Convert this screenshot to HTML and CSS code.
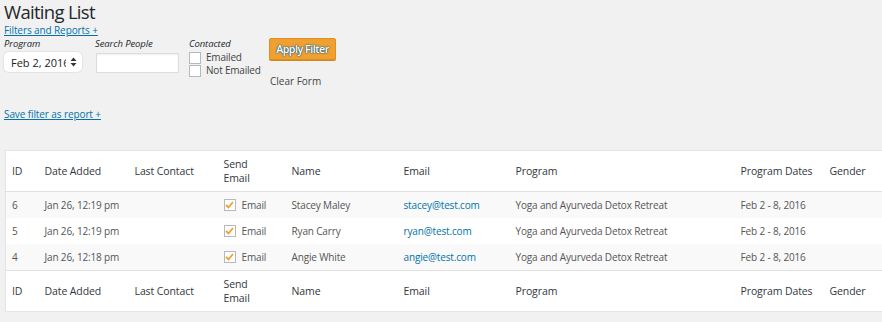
FILE: index.html
```html
<!DOCTYPE html>
<html lang="en">
<head>
    <meta charset="UTF-8">
    <title>Waiting List</title>
    <link rel="stylesheet" href="styles.css">
</head>
<body>
    <h1 class="page-title">Waiting List</h1>
    <a class="toggle-link" href="#">Filters and Reports +</a>
    <form class="filter-form">
        <div class="field field-program">
            <label class="field-label" for="program">Program</label>
            <div class="select-box" id="program">
                <span class="select-value">Feb 2, 2016</span>
                <svg class="select-arrows" width="7" height="10" viewBox="0 0 7 10"><path d="M3.5 0.5 L6.5 4 H0.5 Z M3.5 9.5 L0.5 6 H6.5 Z" fill="#333"/></svg>
            </div>
        </div>
        <div class="field field-search">
            <label class="field-label" for="search">Search People</label>
            <input class="text-input" type="text" id="search">
        </div>
        <div class="field field-contacted">
            <span class="field-label">Contacted</span>
            <label class="check-row"><span class="check-box"></span>Emailed</label>
            <label class="check-row"><span class="check-box"></span>Not Emailed</label>
        </div>
        <div class="field actions">
            <button type="button" class="apply-btn">Apply Filter</button>
            <span class="clear-link">Clear Form</span>
        </div>
    </form>
    <a class="toggle-link save-link" href="#">Save filter as report +</a>

    <div class="table-wrap">
        <table class="list-table">
            <colgroup>
                <col style="width:33px">
                <col style="width:90px">
                <col style="width:89px">
                <col style="width:68px">
                <col style="width:112px">
                <col style="width:112px">
                <col style="width:225px">
                <col style="width:89px">
                <col style="width:90px">
            </colgroup>
            <thead>
                <tr>
                    <th>ID</th><th>Date Added</th><th>Last Contact</th><th>Send<br>Email</th><th>Name</th><th>Email</th><th>Program</th><th>Program Dates</th><th>Gender</th>
                </tr>
            </thead>
            <tbody>
                <tr class="alt">
                    <td>6</td><td>Jan 26, 12:19 pm</td><td></td>
                    <td><span class="send"><span class="tick"><svg width="9" height="8" viewBox="0 0 9 8"><path d="M1 4 L3.5 6.5 L8 1" fill="none" stroke="#f0a02c" stroke-width="1.8"/></svg></span>Email</span></td>
                    <td>Stacey Maley</td><td><a href="#">stacey@test.com</a></td><td>Yoga and Ayurveda Detox Retreat</td><td>Feb 2 - 8, 2016</td><td></td>
                </tr>
                <tr>
                    <td>5</td><td>Jan 26, 12:19 pm</td><td></td>
                    <td><span class="send"><span class="tick"><svg width="9" height="8" viewBox="0 0 9 8"><path d="M1 4 L3.5 6.5 L8 1" fill="none" stroke="#f0a02c" stroke-width="1.8"/></svg></span>Email</span></td>
                    <td>Ryan Carry</td><td><a href="#">ryan@test.com</a></td><td>Yoga and Ayurveda Detox Retreat</td><td>Feb 2 - 8, 2016</td><td></td>
                </tr>
                <tr class="alt">
                    <td>4</td><td>Jan 26, 12:18 pm</td><td></td>
                    <td><span class="send"><span class="tick"><svg width="9" height="8" viewBox="0 0 9 8"><path d="M1 4 L3.5 6.5 L8 1" fill="none" stroke="#f0a02c" stroke-width="1.8"/></svg></span>Email</span></td>
                    <td>Angie White</td><td><a href="#">angie@test.com</a></td><td>Yoga and Ayurveda Detox Retreat</td><td>Feb 2 - 8, 2016</td><td></td>
                </tr>
            </tbody>
            <tfoot>
                <tr>
                    <th>ID</th><th>Date Added</th><th>Last Contact</th><th>Send<br>Email</th><th>Name</th><th>Email</th><th>Program</th><th>Program Dates</th><th>Gender</th>
                </tr>
            </tfoot>
        </table>
    </div>
</body>
</html>
```

FILE: styles.css
```css
body {
    font-family: 'Open Sans', sans-serif;
    background-color: #f1f1f1;
    color: #444;
    margin: 0;
    padding: 0 0 0 4px;
    overflow: hidden;
    font-size: 10px;
}
.page-title {
    font-size: 18.5px;
    letter-spacing: -0.7px;
    font-weight: 400;
    color: #23282d;
    margin: 0;
    line-height: 23px;
}
.toggle-link {
    color: #0073aa;
    font-size: 10px;
    letter-spacing: -0.1px;
    display: inline-block;
    line-height: 14px;
}
.filter-form {
    display: flex;
    align-items: flex-start;
    margin-top: 1px;
}
.field {
    display: flex;
    flex-direction: column;
    align-items: flex-start;
}
.field-program {
    width: 91px;
}
.field-search {
    width: 94px;
}
.field-contacted {
    width: 80px;
}
.field-label {
    font-style: italic;
    font-size: 9.5px;
    letter-spacing: -0.1px;
    color: #23282d;
    line-height: 12px;
    margin-bottom: 2px;
}
.select-box {
    width: 78px;
    height: 20px;
    box-sizing: border-box;
    background: white;
    border-radius: 5px;
    box-shadow: 0 0 0 1px #e4e4e4;
    display: flex;
    align-items: center;
    padding: 0 5px 0 7px;
    font-size: 11px;
    color: #222;
}
.select-value {
    width: 55px;
    overflow: hidden;
    white-space: nowrap;
}
.select-arrows {
    margin-left: auto;
}
.text-input {
    width: 83px;
    height: 20px;
    box-sizing: border-box;
    border: 1px solid #ddd;
    box-shadow: inset 0 1px 2px rgba(0,0,0,0.07);
    background: white;
    margin: 1px 0 0 1px;
}
.field-contacted .field-label {
    margin-bottom: 1px;
}
.check-row {
    display: flex;
    align-items: center;
    font-size: 10px;
    letter-spacing: -0.2px;
    color: #444;
    line-height: 13px;
}
.check-box {
    width: 10px;
    height: 10px;
    border: 1px solid #b4b9be;
    background: white;
    margin-right: 5px;
    display: inline-block;
}
.apply-btn {
    font-family: 'Open Sans', sans-serif;
    font-size: 10.5px;
    font-weight: 600;
    letter-spacing: -0.4px;
    color: white;
    background: #f0a030;
    border: 1px solid #de901f;
    border-radius: 2px;
    height: 22px;
    width: 67px;
    padding: 0;
    text-shadow: 0 0 2px #1d5d80, 0 0 1px #1d5d80, 0 0 1px #1d5d80;
    box-shadow: 0 1px 0 #d0881e;
}
.clear-link {
    margin-top: 14px;
    margin-left: 1px;
    font-size: 10px;
    line-height: 14px;
    color: #444;
}
.save-link {
    margin-top: 19px;
}
.table-wrap {
    margin-top: 29px;
    margin-left: 1px;
    width: 910px;
}
.list-table {
    table-layout: fixed;
    border-collapse: collapse;
    width: 908px;
    background: white;
    border: 1px solid #e5e5e5;
    box-shadow: 0 1px 1px rgba(0,0,0,0.04);
}
.list-table th {
    text-align: left;
    font-weight: 400;
    font-size: 10.5px;
    letter-spacing: -0.1px;
    color: #32373c;
    padding: 0 0 0 6px;
    line-height: 14px;
    height: 40px;
}
.list-table thead tr {
    border-bottom: 1px solid #e1e1e1;
}
.list-table tfoot tr {
    border-top: 1px solid #e1e1e1;
}
.list-table td {
    padding: 0 0 0 6px;
    height: 26px;
    font-size: 10px;
    letter-spacing: -0.15px;
    color: #555;
    white-space: nowrap;
}
.list-table tr.alt td {
    background: #f9f9f9;
}
.list-table a {
    color: #0073aa;
    text-decoration: none;
}
.send {
    display: flex;
    align-items: center;
}
.tick {
    width: 10px;
    height: 10px;
    border: 1px solid #b4b9be;
    background: white;
    margin-right: 6px;
    display: flex;
    align-items: center;
    justify-content: center;
}
```
